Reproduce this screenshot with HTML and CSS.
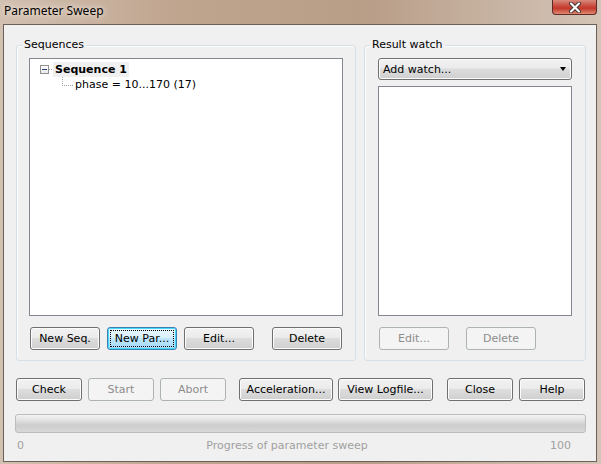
FILE: index.html
```html
<!DOCTYPE html>
<html lang="en">
<head>
    <meta charset="UTF-8">
    <title>Parameter Sweep</title>
    <link rel="stylesheet" href="styles.css">
</head>
<body>
    <div class="window">
        <div class="titlebar">
            <span class="title">Parameter Sweep</span>
            <div class="close">
                <svg width="14" height="11" viewBox="0 0 14 11">
                    <path d="M3 1.5 L11 9.5 M11 1.5 L3 9.5" stroke="#4a3a3a" stroke-width="4" stroke-linecap="round"/>
                    <path d="M3 1.5 L11 9.5 M11 1.5 L3 9.5" stroke="#ffffff" stroke-width="2" stroke-linecap="round"/>
                </svg>
            </div>
        </div>

        <div class="client">
            <div class="groups">
                <div class="group seq">
                    <span class="group-label">Sequences</span>
                    <div class="tree">
                        <div class="node">
                            <span class="expander"></span>
                            <span class="hline"></span>
                            <span class="node-text bold">Sequence 1</span>
                        </div>
                        <div class="node child">
                            <span class="elbow"></span>
                            <span class="node-text">phase = 10...170 (17)</span>
                        </div>
                    </div>
                    <div class="btnrow">
                        <button class="btn w70">New Seq.</button>
                        <button class="btn w70 focused"><span class="focus-rect">New Par...</span></button>
                        <button class="btn w70">Edit...</button>
                        <button class="btn w70 gap-wide">Delete</button>
                    </div>
                </div>

                <div class="group watch">
                    <span class="group-label">Result watch</span>
                    <div class="combo">
                        <span>Add watch...</span>
                        <span class="arrow"></span>
                    </div>
                    <div class="watchlist"></div>
                    <div class="btnrow">
                        <button class="btn w70" disabled>Edit...</button>
                        <button class="btn w70 gap-mid" disabled>Delete</button>
                    </div>
                </div>
            </div>

            <div class="actions">
                <button class="btn w66">Check</button>
                <button class="btn w66 g6" disabled>Start</button>
                <button class="btn w66 g6" disabled>Abort</button>
                <button class="btn w94 g13">Acceleration...</button>
                <button class="btn w95 g5">View Logfile...</button>
                <button class="btn w66 g14">Close</button>
                <button class="btn w66 g6">Help</button>
            </div>

            <div class="progress"></div>
            <div class="scale">
                <span>0</span>
                <span>Progress of parameter sweep</span>
                <span>100</span>
            </div>
        </div>
    </div>
</body>
</html>
```

FILE: styles.css
```css
body {
    margin: 0;
    font-family: "DejaVu Sans", sans-serif;
    font-size: 11px;
}

.window {
    width: 601px;
    height: 464px;
    box-sizing: border-box;
    padding: 0 4px 2px 3px;
    background: linear-gradient(90deg, #d2c0b0 0%, #bfa48e 30%, #b89d87 60%, #d3c4b7 100%);
    display: flex;
    flex-direction: column;
}

.titlebar {
    height: 24px;
    display: flex;
    justify-content: space-between;
    align-items: flex-start;
}

.title {
    font-family: "Noto Sans", sans-serif;
    font-size: 12px;
    margin-top: 2px;
    margin-left: 1px;
    color: #000;
    text-shadow: 0 0 8px #efe6dc, 0 0 4px #efe6dc;
}

.close {
    width: 45px;
    height: 15px;
    box-sizing: border-box;
    border: 1px solid #5e2b26;
    border-top: none;
    border-radius: 0 0 4px 4px;
    background: linear-gradient(#d78a7c 0%, #c8473a 45%, #c23a2d 60%, #e08a70 100%);
    display: flex;
    justify-content: center;
    align-items: center;
    margin-right: 0;
}

.client {
    flex: 1;
    background: #f0f0f0;
    border: 1px solid #6d6058;
}

.groups {
    display: flex;
    margin: 20px 0 0 12px;
}

.group {
    position: relative;
    border: 1px solid #d5dfe5;
    border-radius: 3px;
    box-shadow: inset 1px 1px #fbfcfc;
    box-sizing: border-box;
    padding: 12px 0 0 12px;
}

.group-label {
    position: absolute;
    top: -8px;
    left: 5px;
    padding: 0 2px;
    background: #f0f0f0;
    color: #000;
}

.seq {
    width: 340px;
    height: 316px;
}

.watch {
    width: 222px;
    height: 316px;
    margin-left: 8px;
    padding-left: 13px;
}

.tree {
    width: 314px;
    height: 258px;
    box-sizing: border-box;
    border: 1px solid #828790;
    background: #fff;
    padding-top: 2px;
}

.node {
    height: 16px;
    display: flex;
    align-items: center;
}

.expander {
    width: 9px;
    height: 9px;
    box-sizing: border-box;
    margin-left: 10px;
    border: 1px solid #919191;
    background: linear-gradient(#ffffff, #e8e8e8);
    position: relative;
}

.expander::after {
    content: "";
    position: absolute;
    left: 1px;
    top: 3px;
    width: 5px;
    height: 1px;
    background: #2d3f78;
}

.hline {
    width: 5px;
    border-top: 1px dotted #a0a0a0;
}

.node-text {
    padding: 1px 2px;
    color: #000;
}

.bold {
    font-weight: bold;
    background: #f0f0f0;
    margin-left: -1px;
}

.child {
    align-items: flex-start;
}

.elbow {
    width: 10px;
    height: 8px;
    margin-left: 32px;
    margin-top: 0;
    border-left: 1px dotted #a0a0a0;
    border-bottom: 1px dotted #a0a0a0;
}

.child .node-text {
    padding-top: 1px;
    margin-left: 0;
}

.btnrow {
    display: flex;
    margin-top: 11px;
    padding-left: 1px;
}

.btnrow .btn + .btn {
    margin-left: 7px;
}

.btnrow .btn.gap-wide {
    margin-left: 18px;
}

.btnrow .btn.gap-mid {
    margin-left: 17px;
}

.btn {
    height: 23px;
    box-sizing: border-box;
    border: 1px solid #707070;
    border-radius: 3px;
    background: linear-gradient(#f2f2f2 0%, #ebebeb 45%, #dddddd 50%, #cfcfcf 100%);
    box-shadow: inset 0 0 0 1px #fcfcfc;
    font-family: "DejaVu Sans", sans-serif;
    font-size: 11px;
    color: #000;
    padding: 0;
    display: flex;
    justify-content: center;
    align-items: center;
}

.btn:disabled {
    border-color: #adb2b5;
    background: #f4f4f4;
    box-shadow: none;
    color: #8d8d8d;
}

.focused {
    border-color: #3c7fb1;
    background: linear-gradient(#eaf6fd 0%, #d9f0fc 45%, #bee6fd 50%, #a7d9f5 100%);
    box-shadow: inset 0 0 0 1px #48d8fb;
}

.focus-rect {
    display: flex;
    align-items: center;
    justify-content: center;
    width: 64px;
    height: 17px;
    box-sizing: border-box;
    border: 1px dotted #000;
}

.w66 { width: 66px; }
.w70 { width: 70px; }
.w94 { width: 94px; }
.w95 { width: 95px; }

.g5 { margin-left: 5px; }
.g6 { margin-left: 6px; }
.g13 { margin-left: 13px; }
.g14 { margin-left: 14px; }

.combo {
    width: 194px;
    height: 22px;
    box-sizing: border-box;
    border: 1px solid #707070;
    border-radius: 3px;
    background: linear-gradient(#f2f2f2 0%, #ebebeb 45%, #dddddd 50%, #cfcfcf 100%);
    box-shadow: inset 0 0 0 1px #fcfcfc;
    display: flex;
    justify-content: space-between;
    align-items: center;
    padding: 0 5px 0 4px;
    color: #000;
}

.arrow {
    width: 0;
    height: 0;
    border-left: 3.5px solid transparent;
    border-right: 3.5px solid transparent;
    border-top: 4px solid #000;
}

.watchlist {
    width: 194px;
    height: 230px;
    box-sizing: border-box;
    margin-top: 6px;
    border: 1px solid #828790;
    background: #fff;
}

.actions {
    display: flex;
    margin: 17px 0 0 12px;
}

.progress {
    width: 571px;
    height: 19px;
    box-sizing: border-box;
    margin: 13px 0 0 11px;
    border: 1px solid #bcbcbc;
    border-radius: 3px;
    background: linear-gradient(#f3f3f3 0%, #e2e2e2 30%, #cdcdcd 60%, #d8d8d8 100%);
}

.scale {
    display: flex;
    justify-content: space-between;
    margin: 6px 0 0 13px;
    width: 554px;
    color: #a0a0a0;
}
```
